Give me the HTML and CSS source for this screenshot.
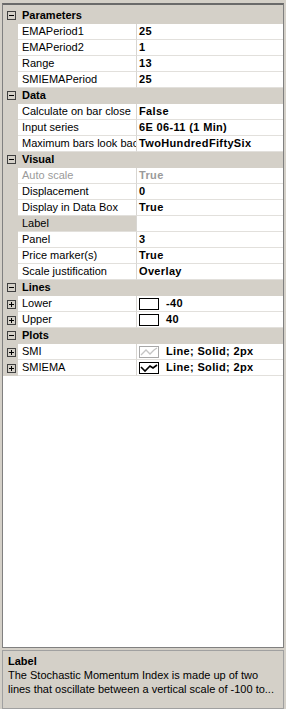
FILE: index.html
```html
<!DOCTYPE html>
<html lang="en">
<head>
    <meta charset="UTF-8">
    <meta name="viewport" content="width=device-width, initial-scale=1.0">
    <title>Indicator properties</title>
    <link rel="stylesheet" href="styles.css">
</head>
<body>
    <div class="grid">
        <div class="rows">
            <div class="cat"><span class="gutter"><span class="toggle"></span></span><span class="cat-name">Parameters</span></div>
            <div class="prop"><span class="gutter"></span><span class="name">EMAPeriod1</span><span class="value">25</span></div>
            <div class="prop"><span class="gutter"></span><span class="name">EMAPeriod2</span><span class="value">1</span></div>
            <div class="prop"><span class="gutter"></span><span class="name">Range</span><span class="value">13</span></div>
            <div class="prop"><span class="gutter"></span><span class="name">SMIEMAPeriod</span><span class="value">25</span></div>

            <div class="cat"><span class="gutter"><span class="toggle"></span></span><span class="cat-name">Data</span></div>
            <div class="prop"><span class="gutter"></span><span class="name">Calculate on bar close</span><span class="value">False</span></div>
            <div class="prop"><span class="gutter"></span><span class="name">Input series</span><span class="value">6E 06-11 (1 Min)</span></div>
            <div class="prop"><span class="gutter"></span><span class="name">Maximum bars look back</span><span class="value">TwoHundredFiftySix</span></div>

            <div class="cat"><span class="gutter"><span class="toggle"></span></span><span class="cat-name">Visual</span></div>
            <div class="prop disabled"><span class="gutter"></span><span class="name">Auto scale</span><span class="value">True</span></div>
            <div class="prop"><span class="gutter"></span><span class="name">Displacement</span><span class="value">0</span></div>
            <div class="prop"><span class="gutter"></span><span class="name">Display in Data Box</span><span class="value">True</span></div>
            <div class="prop selected"><span class="gutter"></span><span class="name">Label</span><span class="value"></span></div>
            <div class="prop"><span class="gutter"></span><span class="name">Panel</span><span class="value">3</span></div>
            <div class="prop"><span class="gutter"></span><span class="name">Price marker(s)</span><span class="value">True</span></div>
            <div class="prop"><span class="gutter"></span><span class="name">Scale justification</span><span class="value">Overlay</span></div>

            <div class="cat"><span class="gutter"><span class="toggle"></span></span><span class="cat-name">Lines</span></div>
            <div class="prop"><span class="gutter"><span class="toggle closed"></span></span><span class="name">Lower</span><span class="value"><span class="swatch"></span>-40</span></div>
            <div class="prop"><span class="gutter"><span class="toggle closed"></span></span><span class="name">Upper</span><span class="value"><span class="swatch"></span>40</span></div>

            <div class="cat"><span class="gutter"><span class="toggle"></span></span><span class="cat-name">Plots</span></div>
            <div class="prop"><span class="gutter"><span class="toggle closed"></span></span><span class="name">SMI</span><span class="value"><span class="swatch faint"><svg width="18" height="10" viewBox="0 0 18 10"><polyline points="1,8 6,3 10,7 14,3 17,1" fill="none" stroke="#c4c4c4" stroke-width="1.3"/></svg></span>Line; Solid; 2px</span></div>
            <div class="prop"><span class="gutter"><span class="toggle closed"></span></span><span class="name">SMIEMA</span><span class="value"><span class="swatch"><svg width="18" height="10" viewBox="0 0 18 10"><polyline points="1,4 5,8 10,3 13,5 17,2" fill="none" stroke="#000" stroke-width="1.6"/></svg></span>Line; Solid; 2px</span></div>
        </div>
    </div>

    <div class="desc">
        <div class="desc-title">Label</div>
        <div class="desc-text">The Stochastic Momentum Index is made up of two lines that oscillate between a vertical scale of -100 to...</div>
    </div>
</body>
</html>
```

FILE: styles.css
```css
* {
    box-sizing: border-box;
}

html, body {
    margin: 0;
    height: 100%;
}

body {
    background-color: #d4d0c8;
    font-family: 'Liberation Sans', Arial, sans-serif;
    font-size: 11px;
    color: #000;
    display: flex;
    flex-direction: column;
    padding: 3px 2px 0 2px;
}

.grid {
    flex: 1;
    background-color: #fff;
    border: 1px solid #808080;
    border-top: 2px solid #6a6a6a;
    overflow: hidden;
}

.rows {
    border-top: 3px solid #d4d0c8;
}

.cat,
.prop {
    display: grid;
    height: 16px;
    line-height: 15px;
}

.cat {
    grid-template-columns: 15px 1fr;
    background-color: #d4d0c8;
}

.prop {
    grid-template-columns: 15px 119px 1fr;
}

.gutter {
    background-color: #d4d0c8;
    display: flex;
    align-items: center;
    justify-content: center;
    padding-left: 1px;
}

.cat .gutter {
    padding-bottom: 1px;
}

.cat-name {
    font-weight: bold;
    padding-left: 4px;
}

.name,
.value {
    border-bottom: 1px solid #e2e0dc;
    white-space: nowrap;
    overflow: hidden;
}

.name {
    padding-left: 4px;
    border-right: 1px solid #d8d6d2;
}

.value {
    padding-left: 2px;
    font-weight: bold;
    letter-spacing: 0.35px;
    display: flex;
    align-items: center;
}

.disabled .name,
.disabled .value {
    color: #9a9a9a;
}

.selected .name {
    background-color: #d4d0c8;
}

.toggle {
    position: relative;
    width: 9px;
    height: 9px;
    border: 1px solid #404040;
}

.toggle::before {
    content: '';
    position: absolute;
    left: 1px;
    top: 3px;
    width: 5px;
    height: 1px;
    background-color: #000;
}

.toggle.closed::after {
    content: '';
    position: absolute;
    left: 3px;
    top: 1px;
    width: 1px;
    height: 5px;
    background-color: #000;
}

.swatch {
    width: 20px;
    height: 12px;
    border: 1px solid #000;
    background-color: #fff;
    margin-right: 7px;
    display: flex;
}

.swatch.faint {
    border-color: #a8a8a8;
}

.desc {
    height: 59px;
    margin-top: 2px;
    border: 1px solid #a0a0a0;
    padding: 3px 5px;
    line-height: 14px;
}

.desc-title {
    font-weight: bold;
}
```
